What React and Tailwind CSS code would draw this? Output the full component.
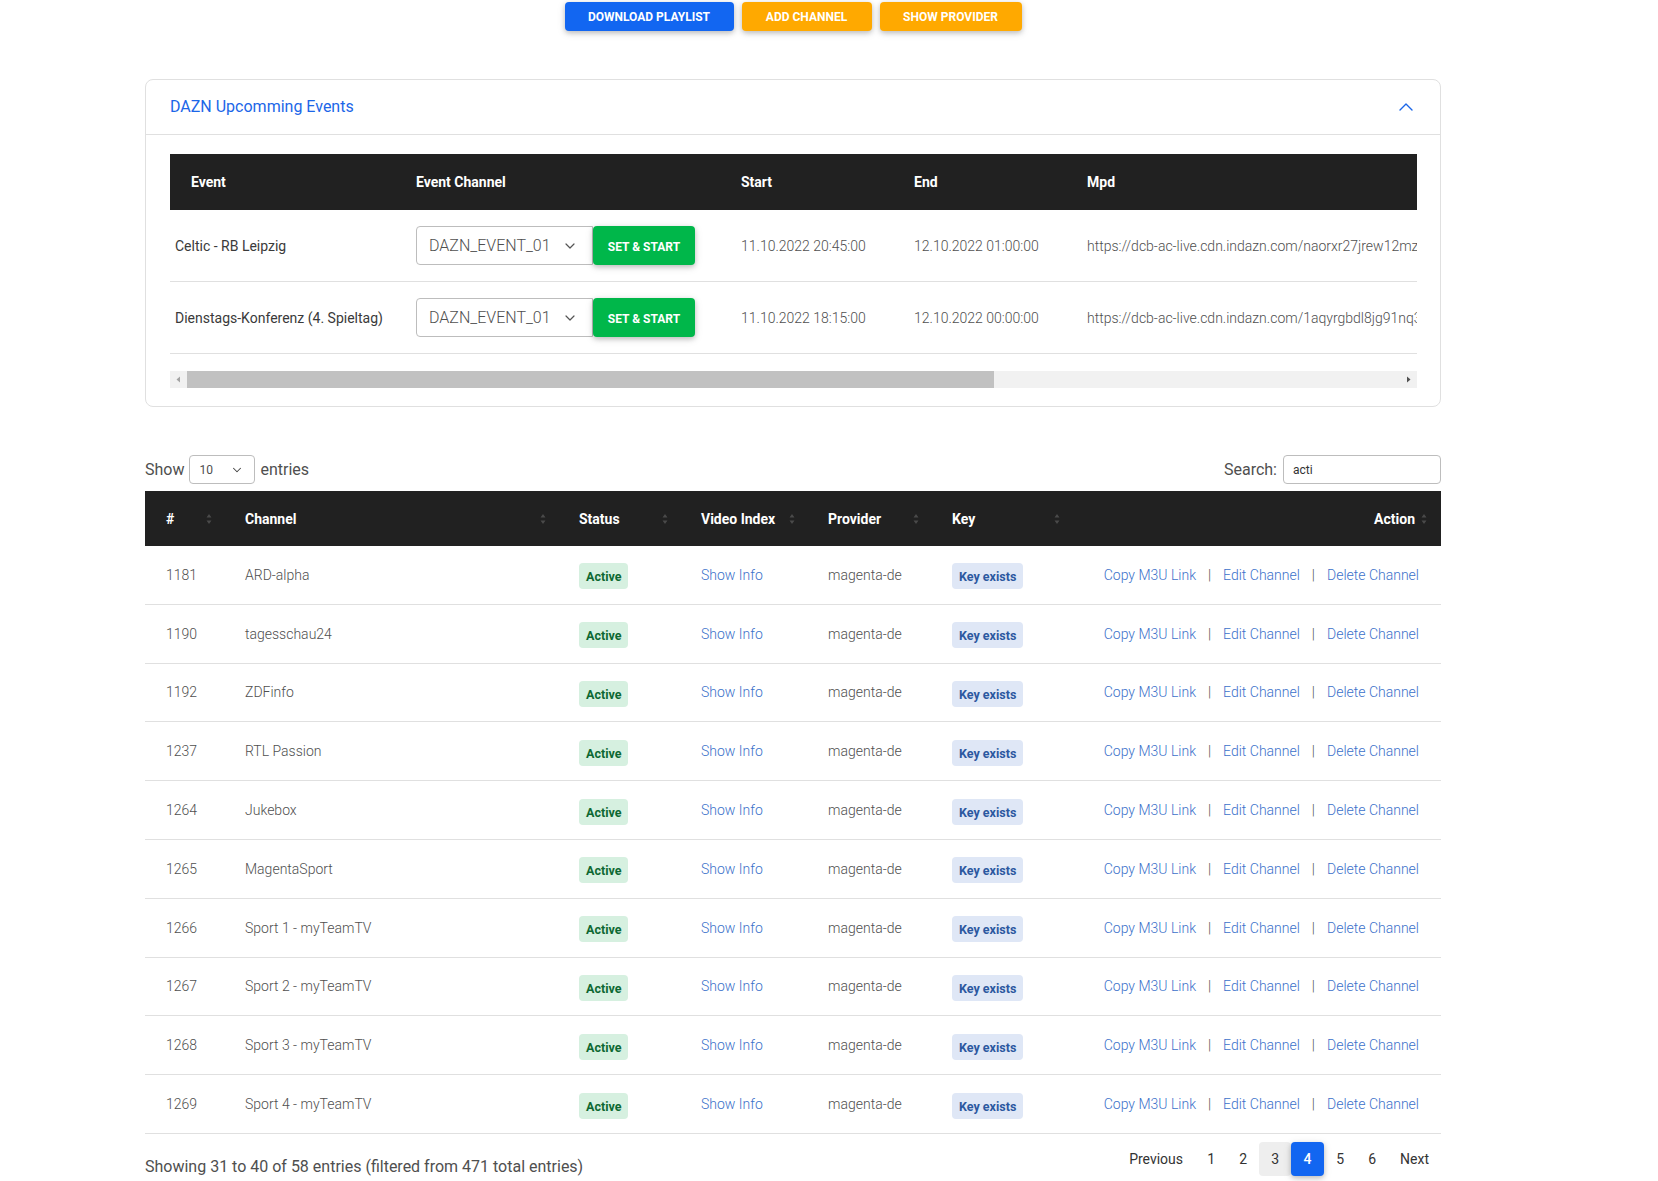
import { ChevronDown, ChevronUp } from "lucide-react";

const EVENTS = [
  {
    name: "Celtic - RB Leipzig",
    channel: "DAZN_EVENT_01",
    start: "11.10.2022 20:45:00",
    end: "12.10.2022 01:00:00",
    mpd: "https://dcb-ac-live.cdn.indazn.com/naorxr27jrew12mzq8lkt0x1p/out/v1/0c1f2e3d/cenc.mpd",
  },
  {
    name: "Dienstags-Konferenz (4. Spieltag)",
    channel: "DAZN_EVENT_01",
    start: "11.10.2022 18:15:00",
    end: "12.10.2022 00:00:00",
    mpd: "https://dcb-ac-live.cdn.indazn.com/1aqyrgbdl8jg91nq3m2h7v5c/out/v1/9ab7c6d5/cenc.mpd",
  },
];

const CHANNELS = [
  { id: 1181, name: "ARD-alpha" },
  { id: 1190, name: "tagesschau24" },
  { id: 1192, name: "ZDFinfo" },
  { id: 1237, name: "RTL Passion" },
  { id: 1264, name: "Jukebox" },
  { id: 1265, name: "MagentaSport" },
  { id: 1266, name: "Sport 1 - myTeamTV" },
  { id: 1267, name: "Sport 2 - myTeamTV" },
  { id: 1268, name: "Sport 3 - myTeamTV" },
  { id: 1269, name: "Sport 4 - myTeamTV" },
];

const TABLE_HEAD = ["#", "Channel", "Status", "Video Index", "Provider", "Key"];

const GRID = "grid grid-cols-[79px_334px_122px_127px_124px_141px_369px]";
const EVENT_GRID = "grid grid-cols-[225px_325px_173px_173px_351px]";
const SHADOW = "shadow-[0_2px_5px_0_rgba(0,0,0,0.2),0_2px_10px_0_rgba(0,0,0,0.1)]";

const SortIcon = () => (
  <svg width="6" height="12" viewBox="0 0 6 12" className="shrink-0">
    <path d="M3 1 L5.5 4.5 H0.5 Z" fill="#4a4a4a" />
    <path d="M3 11 L0.5 7.5 H5.5 Z" fill="#4a4a4a" />
  </svg>
);

const Badge = ({ children, className }) => (
  <span
    className={`mt-[3px] inline-flex h-[26px] items-center rounded px-[7px] pt-[2px] text-[12.5px] font-bold ${className}`}
  >
    {children}
  </span>
);

const App = () => {
  return (
    <div className="min-h-screen bg-white font-[Roboto,sans-serif] text-[#4f4f4f]">
      <div className="ml-[145px] w-[1296px]">
        {/* top buttons */}
        <div className="flex justify-center gap-2 pt-[2px]">
          <button className={`h-[29px] w-[169px] rounded bg-[#1266f1] text-xs font-bold uppercase text-white ${SHADOW}`}>
            Download Playlist
          </button>
          <button className={`h-[29px] w-[130px] rounded bg-[#ffa900] text-xs font-bold uppercase text-white ${SHADOW}`}>
            Add Channel
          </button>
          <button className={`h-[29px] w-[142px] rounded bg-[#ffa900] text-xs font-bold uppercase text-white ${SHADOW}`}>
            Show Provider
          </button>
        </div>

        {/* accordion card */}
        <div className="mt-[48px] rounded-lg border border-[#e0e0e0]">
          <div className="flex h-[55px] items-center justify-between border-b border-[#e0e0e0] pl-6 pr-[22px]">
            <span className="text-base text-[#1b66e8]">DAZN Upcomming Events</span>
            <ChevronUp size={24} strokeWidth={1.4} color="#1b66e8" />
          </div>
          <div className="px-6 pt-[19px] pb-[18px]">
            <div className="w-[1247px] overflow-hidden">
              <div className={`${EVENT_GRID} h-[56px] items-center bg-[#212121] text-sm font-bold text-white`}>
                <div className="pl-[21px]">Event</div>
                <div className="pl-[21px]">Event Channel</div>
                <div className="pl-[21px]">Start</div>
                <div className="pl-[21px]">End</div>
                <div className="pl-[21px]">Mpd</div>
              </div>
              {EVENTS.map((event, index) => (
                <div
                  key={index}
                  className={`${EVENT_GRID} h-[72px] items-center border-b border-[#e0e0e0] text-sm`}
                >
                  <div className="pl-[5px] text-[#3a3a3a]">{event.name}</div>
                  <div className="flex pl-[21px]">
                    <div className="flex h-[39px] w-[177px] items-center justify-between rounded-l border border-[#bdbdbd] pl-3 pr-[14px] text-base font-light text-[#4f4f4f]">
                      <span>{event.channel}</span>
                      <ChevronDown size={16} strokeWidth={1.8} color="#555" />
                    </div>
                    <button className={`h-[39px] w-[102px] rounded bg-[#00b74a] pt-[3px] text-xs font-bold uppercase text-white ${SHADOW}`}>
                      Set &amp; Start
                    </button>
                  </div>
                  <div className="pl-[21px] font-light text-[#4f4f4f]">{event.start}</div>
                  <div className="pl-[21px] font-light text-[#4f4f4f]">{event.end}</div>
                  <div className="min-w-0 overflow-hidden whitespace-nowrap pl-[21px] font-light text-[#4f4f4f]">
                    {event.mpd}
                  </div>
                </div>
              ))}
            </div>
            {/* horizontal scrollbar */}
            <div className="mt-[17px] flex h-[17px] w-[1247px] items-center bg-[#f1f1f1]">
              <div className="flex w-[17px] justify-center">
                <svg width="5" height="7" viewBox="0 0 5 7">
                  <path d="M4 0.5 L0.5 3.5 L4 6.5 Z" fill="#a3a3a3" />
                </svg>
              </div>
              <div className="h-full w-[807px] bg-[#c1c1c1]" />
              <div className="flex-1" />
              <div className="flex w-[17px] justify-center">
                <svg width="5" height="7" viewBox="0 0 5 7">
                  <path d="M1 0.5 L4.5 3.5 L1 6.5 Z" fill="#505050" />
                </svg>
              </div>
            </div>
          </div>
        </div>

        {/* datatable controls */}
        <div className="mt-[48px] flex h-[29px] items-center justify-between text-base">
          <div className="flex items-center gap-[5px]">
            <span>Show</span>
            <div className="flex h-[29px] w-[66px] items-center justify-between rounded border border-[#bdbdbd] pl-[9px] pr-[10px] text-xs">
              <span>10</span>
              <ChevronDown size={14} strokeWidth={1.8} color="#444" />
            </div>
            <span>entries</span>
          </div>
          <div className="flex items-center gap-[6px]">
            <span>Search:</span>
            <div className="flex h-[29px] w-[158px] items-center rounded border border-[#bdbdbd] px-[9px] text-xs text-[#333]">
              acti
            </div>
          </div>
        </div>

        {/* channel table */}
        <div className="mt-[7px]">
          <div className={`${GRID} h-[55px] items-center bg-[#212121] text-sm font-bold text-white`}>
            {TABLE_HEAD.map((label) => (
              <div key={label} className="flex items-center justify-between pl-[21px] pr-[12px]">
                <span>{label}</span>
                <SortIcon />
              </div>
            ))}
            <div className="flex items-center justify-end gap-[6px] pr-[14px]">
              <span>Action</span>
              <SortIcon />
            </div>
          </div>
          {CHANNELS.map((channel) => (
            <div
              key={channel.id}
              className={`${GRID} h-[58.8px] items-center border-b border-[#e0e0e0] text-sm font-light`}
            >
              <div className="pl-[21px]">{channel.id}</div>
              <div className="pl-[21px]">{channel.name}</div>
              <div className="pl-[21px]">
                <Badge className="bg-[#d6f0e0] text-[#0d6832]">Active</Badge>
              </div>
              <div className="pl-[21px] text-[#3b71ca]">Show Info</div>
              <div className="pl-[21px]">magenta-de</div>
              <div className="pl-[21px]">
                <Badge className="bg-[#dfe7f6] text-[#2c58a0]">Key exists</Badge>
              </div>
              <div className="flex justify-end pr-[22px]">
                <span className="text-[#3b71ca]">Copy M3U Link</span>
                <span className="px-[12px]">|</span>
                <span className="text-[#3b71ca]">Edit Channel</span>
                <span className="px-[12px]">|</span>
                <span className="text-[#3b71ca]">Delete Channel</span>
              </div>
            </div>
          ))}
        </div>

        {/* footer */}
        <div className="mt-2 flex items-start justify-between">
          <div className="pt-[13px] text-base leading-6">
            Showing 31 to 40 of 58 entries (filtered from 471 total entries)
          </div>
          <div className="flex h-[34px] items-center text-sm text-[#333]">
            <span className="px-3">Previous</span>
            <span className="flex h-[34px] w-[32px] items-center justify-center">1</span>
            <span className="flex h-[34px] w-[32px] items-center justify-center">2</span>
            <span className="flex h-[34px] w-[32px] items-center justify-center rounded bg-[#eeeeee]">3</span>
            <span className={`flex h-[34px] w-[33px] items-center justify-center rounded bg-[#1266f1] font-medium text-white ${SHADOW}`}>
              4
            </span>
            <span className="flex h-[34px] w-[32px] items-center justify-center">5</span>
            <span className="flex h-[34px] w-[32px] items-center justify-center">6</span>
            <span className="px-3">Next</span>
          </div>
        </div>
      </div>
    </div>
  );
};

export default App;
